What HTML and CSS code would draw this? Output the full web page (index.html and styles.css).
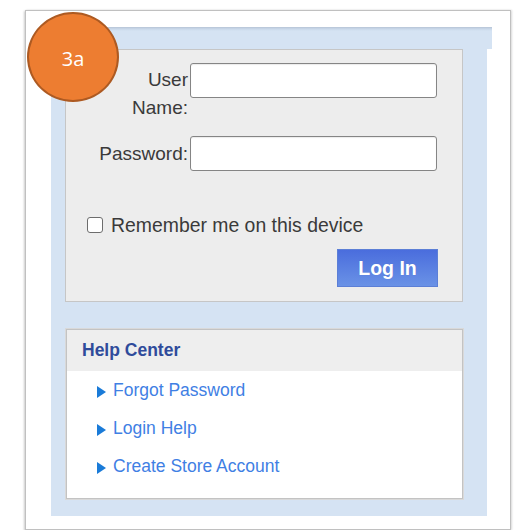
FILE: index.html
```html
<!DOCTYPE html>
<html lang="en">
<head>
<meta charset="utf-8">
<title>Sign In</title>
<link rel="stylesheet" href="styles.css">
</head>
<body>
<div class="frame">
  <div class="step-badge">3a</div>
  <div class="shell">
    <form class="login-panel">
      <div class="form-grid">
        <label class="field-label two-line" for="user">User<br>Name:</label>
        <input class="text-input" id="user" type="text">
        <label class="field-label centered" for="pass">Password:</label>
        <input class="text-input" id="pass" type="password">
      </div>
      <label class="remember">
        <input class="check" type="checkbox">
        <span>Remember me on this device</span>
      </label>
      <div class="actions">
        <button class="login-btn" type="button">Log In</button>
      </div>
    </form>

    <div class="help-panel">
      <div class="help-header">Help Center</div>
      <ul class="help-links">
        <li><span class="arrow"></span><a href="#">Forgot Password</a></li>
        <li><span class="arrow"></span><a href="#">Login Help</a></li>
        <li><span class="arrow"></span><a href="#">Create Store Account</a></li>
      </ul>
    </div>
  </div>
</div>
</body>
</html>
```

FILE: styles.css
```css
* {
  box-sizing: border-box;
}

html, body {
  margin: 0;
  padding: 0;
  background: #ffffff;
}

body {
  font-family: "Liberation Sans", Arial, sans-serif;
  color: #3a3a3a;
  overflow: hidden;
}

/* white page card with a soft edge */
.frame {
  position: relative;
  margin: 10px 0 0 25px;
  width: 486px;
  height: 520px;
  background: #ffffff;
  border: 1px solid #c0c0c0;
  box-shadow: -1px 1px 2px rgba(0, 0, 0, 0.2), 1px 0 2px rgba(0, 0, 0, 0.14);
  padding: 16px 0 0 25px;
}

/* numbered callout */
.step-badge {
  position: absolute;
  left: 1px;
  top: 1px;
  width: 92px;
  height: 90px;
  border-radius: 50%;
  background: #ed7d31;
  border: 2px solid #ad5a22;
  color: #ffffff;
  font-family: "Open Sans", "Noto Sans", sans-serif;
  font-size: 20px;
  display: flex;
  align-items: center;
  justify-content: center;
  padding-top: 2px;
  z-index: 2;
}

/* light blue portal shell */
.shell {
  position: relative;
  width: 436px;
  height: 489px;
  background: linear-gradient(#b6c4d6 0, #c9d8ea 2px, #d5e3f3 4px, #d5e3f3 100%);
  padding: 22px 24px 0 14px;
}

.shell::after {
  content: "";
  position: absolute;
  right: -5px;
  top: 0;
  width: 5px;
  height: 22px;
  background: linear-gradient(#b6c4d6 0, #c9d8ea 2px, #d5e3f3 4px, #d5e3f3 100%);
}

.login-panel {
  width: 398px;
  height: 253px;
  background: #ededed;
  border: 1px solid #c6c6c6;
  padding-top: 13px;
  margin: 0;
}

.form-grid {
  display: grid;
  grid-template-columns: 122px 247px;
  column-gap: 2px;
  row-gap: 14px;
  align-items: start;
}

.field-label {
  font-size: 19px;
  line-height: 28px;
  text-align: right;
  color: #3a3a3a;
}

.two-line {
  padding-top: 3px;
}

.centered {
  align-self: center;
}

.text-input {
  width: 247px;
  height: 35px;
  border: 1px solid #858585;
  border-radius: 3px;
  background: #ffffff;
  box-shadow: inset 0 1px 1px rgba(0, 0, 0, 0.08);
  margin: 0;
  font-size: 16px;
}

.remember {
  display: flex;
  align-items: center;
  height: 28px;
  margin-top: 40px;
  padding-left: 21px;
  font-size: 19.4px;
  color: #3a3a3a;
}

.check {
  appearance: none;
  -webkit-appearance: none;
  width: 16px;
  height: 16px;
  margin: 0 8px 0 0;
  border: 1px solid #6d6d6d;
  border-radius: 3px;
  background: #ffffff;
}

.actions {
  display: flex;
  justify-content: flex-end;
  margin-top: 10px;
  padding-right: 24px;
}

.login-btn {
  width: 101px;
  height: 38px;
  border: 1px solid #5c7fd6;
  border-radius: 0;
  background: linear-gradient(#4a6ddd, #6a92e6);
  color: #ffffff;
  font-family: "Liberation Sans", Arial, sans-serif;
  font-weight: bold;
  font-size: 19.5px;
  padding: 0;
  text-shadow: 0 0 1px rgba(0, 0, 0, 0.1);
}

.help-panel {
  margin: 27px 0 0 1px;
  width: 397px;
  height: 170px;
  background: #ffffff;
  border: 1px solid #c3c3c3;
  box-shadow: 0 0 0 1px #d9d9d9;
}

.help-header {
  height: 41px;
  background: #eeeeee;
  padding-left: 15px;
  display: flex;
  align-items: center;
  font-size: 17.5px;
  font-weight: bold;
  color: #2f4b9b;
}

.help-links {
  list-style: none;
  margin: 0;
  padding: 0 0 0 30px;
}

.help-links li {
  display: flex;
  align-items: center;
  height: 38px;
  font-size: 17.5px;
}

.help-links li:nth-child(3) {
  height: 39px;
}

.arrow {
  width: 0;
  height: 0;
  border-top: 6px solid transparent;
  border-bottom: 6px solid transparent;
  border-left: 9px solid #1a7bd8;
  margin: 3px 7px 0 0;
}

.help-links a {
  color: #3f80e4;
  text-decoration: none;
}
```
